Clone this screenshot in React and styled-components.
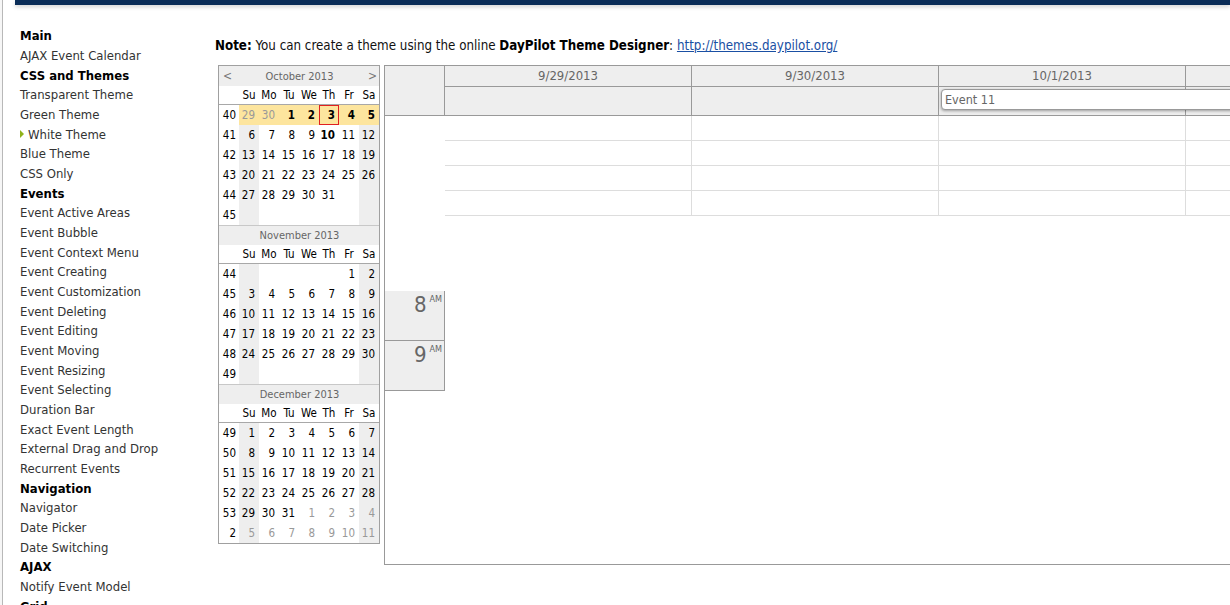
import React from 'react';
import styled, { createGlobalStyle, css } from 'styled-components';

const GlobalStyle = createGlobalStyle`
  html, body {
    margin: 0;
    padding: 0;
    overflow: hidden;
    background: #fff;
  }
  body {
    font-family: "DejaVu Sans Condensed", "DejaVu Sans", sans-serif;
    font-size: 12px;
    color: #333;
  }
`;

const menu = [
  { label: 'Main', heading: true },
  { label: 'AJAX Event Calendar' },
  { label: 'CSS and Themes', heading: true },
  { label: 'Transparent Theme' },
  { label: 'Green Theme' },
  { label: 'White Theme', active: true },
  { label: 'Blue Theme' },
  { label: 'CSS Only' },
  { label: 'Events', heading: true },
  { label: 'Event Active Areas' },
  { label: 'Event Bubble' },
  { label: 'Event Context Menu' },
  { label: 'Event Creating' },
  { label: 'Event Customization' },
  { label: 'Event Deleting' },
  { label: 'Event Editing' },
  { label: 'Event Moving' },
  { label: 'Event Resizing' },
  { label: 'Event Selecting' },
  { label: 'Duration Bar' },
  { label: 'Exact Event Length' },
  { label: 'External Drag and Drop' },
  { label: 'Recurrent Events' },
  { label: 'Navigation', heading: true },
  { label: 'Navigator' },
  { label: 'Date Picker' },
  { label: 'Date Switching' },
  { label: 'AJAX', heading: true },
  { label: 'Notify Event Model' },
  { label: 'Grid', heading: true },
];

// d: day number, o: other month, b: has events, t: today
const plain = (list) => list.map((d) => ({ d }));

const months = [
  {
    title: 'October 2013',
    arrows: true,
    weeks: [
      { n: 40, sel: true, days: [{ d: 29, o: true }, { d: 30, o: true }, { d: 1, b: true }, { d: 2, b: true }, { d: 3, b: true, t: true }, { d: 4, b: true }, { d: 5, b: true }] },
      { n: 41, days: [{ d: 6 }, { d: 7 }, { d: 8 }, { d: 9 }, { d: 10, b: true }, { d: 11 }, { d: 12 }] },
      { n: 42, days: plain([13, 14, 15, 16, 17, 18, 19]) },
      { n: 43, days: plain([20, 21, 22, 23, 24, 25, 26]) },
      { n: 44, days: plain([27, 28, 29, 30, 31, null, null]) },
      { n: 45, days: plain(Array(7).fill(null)) },
    ],
  },
  {
    title: 'November 2013',
    weeks: [
      { n: 44, days: plain([null, null, null, null, null, 1, 2]) },
      { n: 45, days: plain([3, 4, 5, 6, 7, 8, 9]) },
      { n: 46, days: plain([10, 11, 12, 13, 14, 15, 16]) },
      { n: 47, days: plain([17, 18, 19, 20, 21, 22, 23]) },
      { n: 48, days: plain([24, 25, 26, 27, 28, 29, 30]) },
      { n: 49, days: plain(Array(7).fill(null)) },
    ],
  },
  {
    title: 'December 2013',
    weeks: [
      { n: 49, days: plain([1, 2, 3, 4, 5, 6, 7]) },
      { n: 50, days: plain([8, 9, 10, 11, 12, 13, 14]) },
      { n: 51, days: plain([15, 16, 17, 18, 19, 20, 21]) },
      { n: 52, days: plain([22, 23, 24, 25, 26, 27, 28]) },
      { n: 53, days: [{ d: 29 }, { d: 30 }, { d: 31 }, { d: 1, o: true }, { d: 2, o: true }, { d: 3, o: true }, { d: 4, o: true }] },
      { n: 2, days: [5, 6, 7, 8, 9, 10, 11].map((d) => ({ d, o: true })) },
    ],
  },
];

const dayNames = ['Su', 'Mo', 'Tu', 'We', 'Th', 'Fr', 'Sa'];
const columns = ['9/29/2013', '9/30/2013', '10/1/2013', '10/2/2013', '10/3/2013', '10/4/2013', '10/5/2013'];

const Page = styled.div`
  display: flex;
  min-height: 100vh;
`;

const Edge = styled.div`
  width: 2px;
  flex-shrink: 0;
  background: #f6f6f6;
  border-right: 1px solid #b8b8b8;
`;

const Content = styled.div`
  flex: 1;
  min-width: 0;
`;

const TopBar = styled.div`
  height: 5px;
  margin-left: 12px;
  background: #0a2c57;
  box-shadow: 0 2px 4px rgba(0, 0, 0, 0.18);
`;

const Columns = styled.div`
  display: flex;
`;

const Sidebar = styled.nav`
  width: 212px;
  flex-shrink: 0;
  box-sizing: border-box;
  padding: 21px 0 0 17px;
`;

const MenuItem = styled.div`
  display: flex;
  align-items: center;
  height: 19.68px;
  line-height: 19px;
  font-size: 13px;
  font-weight: ${({ $heading }) => ($heading ? 'bold' : 'normal')};
  color: ${({ $heading }) => ($heading ? '#000' : '#333')};
`;

const Marker = styled.span`
  width: 0;
  height: 0;
  border-top: 4px solid transparent;
  border-bottom: 4px solid transparent;
  border-left: 4px solid #8fb21a;
  margin-right: 4px;
`;

const Main = styled.main`
  padding-top: 31px;
  flex-shrink: 0;
`;

const Note = styled.p`
  margin: 0 0 10px;
  line-height: 19px;
  font-size: 13.25px;
  color: #111;

  b {
    color: #000;
  }

  a {
    color: #1a4fa3;
    text-decoration: underline;
  }
`;

const Row = styled.div`
  display: flex;
  align-items: flex-start;
  gap: 4px;
  padding-left: 3px;
`;

const Navigator = styled.div`
  width: 160px;
  border: 1px solid #a0a0a0;
  font-size: 11.5px;
  color: #000;
`;

const MonthTitle = styled.div`
  display: flex;
  justify-content: space-between;
  align-items: center;
  height: 20px;
  padding: 0 3px 0 4px;
  background: #eeeeee;
  color: #666;
  font-size: 11px;
  ${({ $divided }) => $divided && css`border-top: 1px solid #c8c8c8; height: 19px;`}

  span:nth-child(2) {
    flex: 1;
    text-align: center;
  }
`;

const Arrow = styled.span`
  width: 8px;
  color: #777;
  font-size: 12px;
`;

const DayHeader = styled.div`
  display: grid;
  grid-template-columns: repeat(8, 20px);
  height: 18px;
  align-items: center;
  border-bottom: 1px solid #a8a8a8;
  text-align: center;
`;

const Week = styled.div`
  display: grid;
  grid-template-columns: repeat(8, 20px);
`;

const WeekNo = styled.div`
  height: 20px;
  line-height: 20px;
  text-align: right;
  padding-right: 3px;
`;

const Day = styled.div`
  box-sizing: border-box;
  height: 20px;
  line-height: 18px;
  text-align: right;
  padding-right: 3px;
  border: 1px solid transparent;
  background: ${({ $sel, $weekend }) => ($sel ? '#fde59e' : $weekend ? '#eeeeee' : '#fff')};
  color: ${({ $other }) => ($other ? '#999' : '#000')};
  font-weight: ${({ $busy }) => ($busy ? 'bold' : 'normal')};
  ${({ $today }) => $today && css`border-color: #e02020;`}
`;

const Calendar = styled.div`
  width: ${62 + 7 * 247}px;
  height: 500px;
  box-sizing: border-box;
  border: 1px solid #999;
  display: flex;
  flex-direction: column;
  font-size: 13px;
  color: #666;
`;

const Header = styled.div`
  display: flex;
  border-bottom: 1px solid #999;
`;

const Corner = styled.div`
  width: 59px;
  flex-shrink: 0;
  background: #eeeeee;
  border-right: 1px solid #999;
`;

const HeaderCol = styled.div`
  position: relative;
  width: 247px;
  flex-shrink: 0;
  box-sizing: border-box;
  border-right: 1px solid #999;
  background: #eeeeee;
`;

const DateLabel = styled.div`
  height: 20px;
  line-height: 20px;
  text-align: center;
  border-bottom: 1px solid #999;
`;

const AllDay = styled.div`
  height: 28px;
`;

const AllDayEvent = styled.div`
  position: absolute;
  top: 23px;
  left: 2px;
  width: ${({ $span }) => $span * 247 - 6}px;
  height: 21px;
  box-sizing: border-box;
  padding-left: 3px;
  line-height: 19px;
  font-size: 12.5px;
  background: #fff;
  border: 1px solid #999;
  border-radius: 4px;
  box-shadow: 0 1px 3px rgba(0, 0, 0, 0.35);
  color: #666;
  z-index: 1;
`;

const Body = styled.div`
  display: flex;
  flex: 1;
`;

const HourColumn = styled.div`
  width: 60px;
  flex-shrink: 0;
  padding-top: 175px;
`;

const HourCell = styled.div`
  height: 50px;
  box-sizing: border-box;
  background: #eeeeee;
  border-right: 1px solid #999;
  border-bottom: 1px solid #999;
  display: flex;
  justify-content: flex-end;
  padding: 2px 2px 0 0;
  color: #666;

  span {
    font-size: 22px;
    line-height: 24px;
  }

  sup {
    font-size: 9px;
    line-height: 12px;
    margin-left: 3px;
    vertical-align: top;
  }
`;

const GridCol = styled.div`
  width: 247px;
  flex-shrink: 0;
  align-self: flex-start;
  box-sizing: border-box;
  border-right: 1px solid #ddd;
`;

const Slot = styled.div`
  height: 25px;
  box-sizing: border-box;
  border-bottom: 1px solid #ddd;
`;

function MonthBlock({ month, first }) {
  return (
    <div>
      <MonthTitle $divided={!first}>
        <Arrow>{month.arrows ? '<' : ''}</Arrow>
        <span>{month.title}</span>
        <Arrow>{month.arrows ? '>' : ''}</Arrow>
      </MonthTitle>
      <DayHeader>
        <span />
        {dayNames.map((n) => (
          <span key={n}>{n}</span>
        ))}
      </DayHeader>
      {month.weeks.map((w) => (
        <Week key={w.n}>
          <WeekNo>{w.n}</WeekNo>
          {w.days.map((day, i) => (
            <Day
              key={i}
              $sel={w.sel}
              $weekend={i === 0 || i === 6}
              $other={day.o}
              $busy={day.b}
              $today={day.t}
            >
              {day.d}
            </Day>
          ))}
        </Week>
      ))}
    </div>
  );
}

export default function App() {
  return (
    <Page>
      <GlobalStyle />
      <Edge />
      <Content>
        <TopBar />
        <Columns>
          <Sidebar>
            {menu.map((m) => (
              <MenuItem key={m.label + (m.heading ? '-h' : '')} $heading={m.heading}>
                {m.active && <Marker />}
                {m.label}
              </MenuItem>
            ))}
          </Sidebar>
          <Main>
            <Note>
              <b>Note:</b> You can create a theme using the online <b>DayPilot Theme Designer</b>:{' '}
              <a href="#">http://themes.daypilot.org/</a>
            </Note>
            <Row>
              <Navigator>
                {months.map((m, i) => (
                  <MonthBlock key={m.title} month={m} first={i === 0} />
                ))}
              </Navigator>
              <Calendar>
                <Header>
                  <Corner />
                  {columns.map((c, i) => (
                    <HeaderCol key={c}>
                      <DateLabel>{c}</DateLabel>
                      <AllDay />
                      {i === 2 && <AllDayEvent $span={2}>Event 11</AllDayEvent>}
                    </HeaderCol>
                  ))}
                </Header>
                <Body>
                  <HourColumn>
                    <HourCell>
                      <span>8</span>
                      <sup>AM</sup>
                    </HourCell>
                    <HourCell>
                      <span>9</span>
                      <sup>AM</sup>
                    </HourCell>
                  </HourColumn>
                  {columns.map((c) => (
                    <GridCol key={c}>
                      <Slot />
                      <Slot />
                      <Slot />
                      <Slot />
                    </GridCol>
                  ))}
                </Body>
              </Calendar>
            </Row>
          </Main>
        </Columns>
      </Content>
    </Page>
  );
}
